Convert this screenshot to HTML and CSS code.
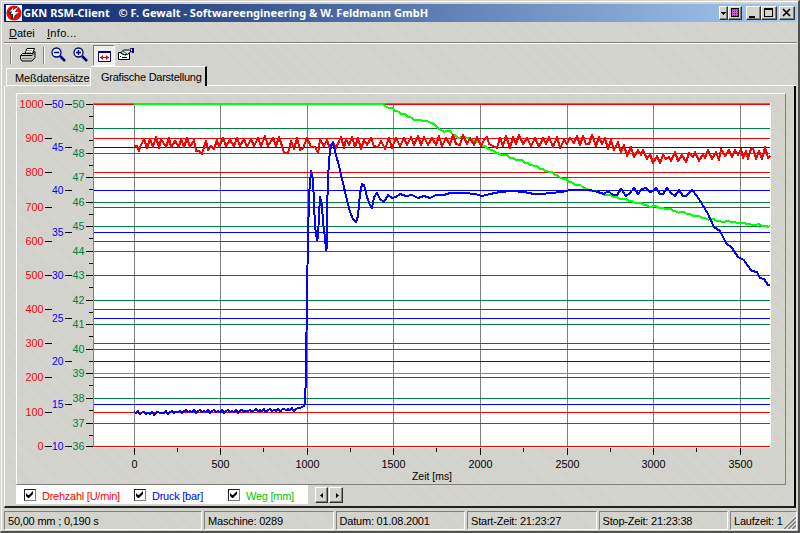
FILE: index.html
```html
<!DOCTYPE html>
<html lang="de">
<head>
<meta charset="utf-8">
<title>GKN RSM-Client</title>
<link rel="stylesheet" href="styles.css">
</head>
<body>
<div class="window">
  <header class="titlebar">
    <svg class="logo" width="16" height="16" viewBox="0 0 16 16"><rect width="16" height="16" fill="#fff"/><circle cx="8" cy="8" r="7.6" fill="#f00808"/><path d="M1 8l5-5v3l5-5v4l-3 3h4l-4 5-3 2 1-5H3l1-3z" fill="#222"/><path d="M3 7l4-4v2l5-3-3 5h4l-4 3-2 4V9H5l1-3z" fill="#fff"/></svg>
    <span class="title">GKN RSM-Client&nbsp;&nbsp; © F. Gewalt - Softwareengineering &amp; W. Feldmann GmbH</span>
    <div class="controls">
      <button class="wb narrow"><svg width="7" height="12"><path d="M1 5h5v1H5v1H4v1H3V7H2V6H1z"/></svg></button>
      <button class="wb"><svg width="12" height="12"><path d="M2 1h8v9H2z"/><path d="M3 2h6v7H3z" fill="#d060d0"/><path d="M4 2v7M6 2v7M8 2v7" transform="translate(.5 0)" stroke="#702070" stroke-dasharray="1 1"/></svg></button>
      <button class="wb min"><svg width="12" height="12"><path d="M2 9h6v2H2z"/></svg></button>
      <button class="wb wide"><svg width="13" height="12"><path d="M2 1h9v9H2z M3 3v6h7V3z" fill-rule="evenodd"/></svg></button>
      <button class="wb wide close"><svg width="13" height="12"><path d="M3 2l7 7M10 2l-7 7" stroke="#000" stroke-width="1.7"/></svg></button>
    </div>
  </header>
  <nav class="menu"><span><u>D</u>atei</span><span class="info"><u>I</u>nfo...</span></nav>
  <div class="toolbar">
    <i class="sep"></i>
    <svg class="print" width="16" height="16" viewBox="0 0 16 16"><path d="M4.500 7.500l2.500-6h7.500l-2.500 6z" fill="#fff" stroke="#000"/><path d="M7 3.500h5M6.500 5.500h5" stroke="#999"/><path d="M.5 8.500l2-2h10l2.500-2v6l-3 3.500h-10l-1.500-2z" fill="#c8c8c4" stroke="#000"/><path d="M1 8.500h11l2-2" fill="none" stroke="#000"/><path d="M2 11.500h10" stroke="#808080"/></svg>
    <i class="sep two"></i>
    <svg class="zo" width="16" height="16" viewBox="0 0 16 16"><circle cx="5.500" cy="5.500" r="4.500" fill="#eee" stroke="#000080" stroke-width="1.300"/><path d="M3 5.500h5" stroke="#000080" stroke-width="1.500"/><path d="M9 9l5 5" stroke="#000080" stroke-width="2.500"/></svg>
    <svg class="zi" width="16" height="16" viewBox="0 0 16 16"><circle cx="5.500" cy="5.500" r="4.500" fill="#eee" stroke="#000080" stroke-width="1.300"/><path d="M3 5.500h5M5.500 3v5" stroke="#000080" stroke-width="1.500"/><path d="M9 9l5 5" stroke="#000080" stroke-width="2.500"/></svg>
    <span class="pressed"><svg width="14" height="12"><path d="M.5.5h12v10H.5z" fill="#fff" stroke="#000080"/><path d="M0 0h13v2H0z" fill="#000080"/><path d="M2 6.500h9" stroke="red"/><path d="M5 4v5L2 6.500zM8 4v5l3-2.500z" fill="red"/></svg></span>
    <svg class="prop" width="17" height="13"><path d="M.5 4.500h11v7H.5z" fill="#fff" stroke="#000"/><path d="M2.500 5l3-3h7v2l-3 2.500H5z" fill="#ddd" stroke="#000"/><path d="M3 4l5 4M5 3l4 3" stroke="#008040"/><path d="M12 0h4v5h-2z" fill="#000080"/><path d="M13 1h1v2h-1z" fill="#fff"/><path d="M2 8.500h1m1 1h5" stroke="#000"/></svg>
  </div>
  <div class="tabs"><span class="tab">Meßdatensätze</span><span class="tab active">Grafische Darstellung</span><i class="tabfill"></i></div>
  <main class="page">
    <section class="panel"><svg id="chart" width="768" height="390" viewBox="17 94 768 390"></svg></section>
    <div class="below">
      <div class="legend">
        <label class="red"><i class="box"><svg width="9" height="9"><path d="M1 3v3l2 2h1l4-4V1L4 5H3z"/></svg></i><span>Drehzahl [U/min]</span></label>
        <label class="blue"><i class="box"><svg width="9" height="9"><path d="M1 3v3l2 2h1l4-4V1L4 5H3z"/></svg></i><span>Druck [bar]</span></label>
        <label class="green"><i class="box"><svg width="9" height="9"><path d="M1 3v3l2 2h1l4-4V1L4 5H3z"/></svg></i><span>Weg [mm]</span></label>
      </div>
      <button class="arrow first"><svg width="9" height="9"><path d="M5 2v5L2 4.500z"/></svg></button>
      <button class="arrow"><svg width="9" height="9"><path d="M4 2v5l3-2.500z"/></svg></button>
    </div>
  </main>
  <footer class="status">
    <span>50,00 mm ; 0,190 s</span><span>Maschine: 0289</span><span>Datum: 01.08.2001</span><span>Start-Zeit: 21:23:27</span><span>Stop-Zeit: 21:23:38</span><span class="last">Laufzeit: 1<svg class="grip" width="12" height="12"><path d="M0 12L12 0M4 12l8-8M8 12l4-4" stroke="#808080" stroke-width="2"/><path d="M-1.500 12l13.500-13.500M2.500 12L12 2.500M6.500 12L12 6.500" stroke="#fff"/></svg></span>
  </footer>
</div>
<script src="chart.js"></script>
</body>
</html>
```
FILE: styles.css
```css
* { box-sizing: border-box; }
body { margin: 0; width: 800px; height: 533px; overflow: hidden; background: #d4d3cd; font: 11px/14px "Liberation Sans", Arial, sans-serif; color: #000; }
.window { width: 800px; height: 533px; border: 1px solid #d4d3cd; border-right: 2px solid #505050; border-bottom: 2px solid #505050; padding: 0 1px 0 2px; box-shadow: inset 1px 1px #fff; display: flex; flex-direction: column; background: repeating-linear-gradient(45deg, #d6d5cf 0 1px, #d1d1cc 1px 2px); }
.titlebar { margin: 3px 0 0 1px; height: 18px; display: flex; align-items: center; background: linear-gradient(90deg, #0a246a, #a6caf0); flex: none; }
.logo { margin-left: 2px; }
.title { color: #fff; font: bold 11px/16px "Noto Sans", sans-serif; margin-left: 1px; white-space: nowrap; letter-spacing: .03px; }
.controls { display: flex; margin-left: auto; padding-right: 2px; }
button { padding: 0; margin: 0; background: #d4d3cd; border: 1px solid; border-color: #fff #303030 #303030 #fff; box-shadow: inset -1px -1px #808080; border-radius: 0; }
button svg { display: block; }
.wb { width: 14px; height: 14px; }
.wb.narrow { width: 9px; }
.wb.min { margin-left: 4px; width: 15px; }
.wb.wide { width: 16px; }
.wb.close { margin-left: 2px; }
.menu { height: 21px; margin-left: 1px; border-bottom: 1px solid #808080; box-shadow: 0 1px #fff; display: flex; padding: 4px 0 0 5px; flex: none; }
.menu span { width: 38px; }
.menu .info { letter-spacing: .3px; }
.toolbar { height: 23px; display: flex; flex: none; padding-top: 4px; }
.sep { width: 2px; height: 17px; border-left: 1px solid #808080; border-right: 1px solid #fff; margin-left: 7px; }
.sep.two { margin-left: 7px; }
.print { margin-left: 8px; }
.zo { margin-left: 6px; }
.zi { margin-left: 6px; }
.pressed { width: 22px; height: 21px; margin: -2px 0 0 4px; border: 1px solid; border-color: #808080 #fff #fff #808080; background: #eeeeeb; padding: 5px 0 0 4px; line-height: 0; }
.prop { margin: 1px 0 0 3px; }
.tabs { height: 20px; display: flex; align-items: flex-end; flex: none; padding-left: 3px; letter-spacing: -.25px; white-space: nowrap; }
.tab { width: 85px; height: 18px; border: 1px solid #fff; padding: 3px 0 0 8px; line-height: 13px; letter-spacing: -.1px; }
.tab.active { width: 116px; height: 20px; border-right: 2px solid #000; border-bottom: 0; border-left: 0; padding: 4px 0 0 10px; letter-spacing: -.25px; }
.tabfill { flex: 1; border-bottom: 1px solid #fff; margin-right: 1px; }
.page { height: 422px; width: 792px; margin-left: 1px; flex: none; border-left: 1px solid #fff; border-right: 2px solid #000; border-bottom: 2px solid #202020; padding: 7px 0 0 11px; }
.panel { width: 770px; height: 392px; border: 1px solid #808080; border-left-color: #fff; border-top-color: #fff; }
.panel svg { display: block; }
.below { display: flex; height: 19px; }
.legend { width: 292px; height: 19px; background: #fff; display: flex; letter-spacing: -.25px; }
.legend label { display: flex; padding: 4px 0 0 8px; white-space: nowrap; }
.red { width: 110px; color: red; }
.blue { width: 94px; color: #00f; }
.green { color: #00c400; }
.box { width: 12px; height: 12px; border: 1px solid #808080; border-top-color: #202020; border-left-color: #202020; margin-right: 6px; }
.box svg { display: block; }
.arrow { width: 14px; height: 16px; padding: 0 2px; margin: 2px 0 0 1px; }
.arrow.first { margin-left: 7px; width: 13px; }
.status { display: flex; gap: 2px; margin: 3px 0 0 1px; height: 19px; letter-spacing: -.2px; white-space: nowrap; }
.status span { flex: none; width: 129.500px; border: 1px solid; border-color: #808080 #fff #fff #808080; padding: 2px 3px; }
.status span:first-child { width: 198px; }
.status span:last-child { width: 67px; display: flex; padding-right: 0; }
.grip { margin: 3px 0 0 auto; }
#chart text { font: 11px "Liberation Sans", sans-serif; }
.curve { fill: none; stroke-width: 2; stroke-linejoin: round; }
```
FILE: chart.js
```js
const NS = 'http://www.w3.org/2000/svg';
const chart = document.getElementById('chart');
function add(tag, attrs, text) {
  const e = document.createElementNS(NS, tag);
  for (const k in attrs) e.setAttribute(k, attrs[k]);
  if (text !== undefined) e.textContent = text;
  chart.appendChild(e);
}
function rect(x, y, w, h, fill) { add('rect', { x, y, width: w, height: h, fill, 'shape-rendering': 'crispEdges' }); }
function label(s, right, y, w, fill) { add('text', { x: right - w, y, textLength: w, lengthAdjust: 'spacingAndGlyphs', fill }, String(s)); }
rect(93, 103, 678, 345, '#fff');
rect(93, 103, 677, 1, '#808080');
rect(93, 103, 1, 344, '#808080');
['0', '500', '1000', '1500', '2000', '2500', '3000', '3500'].forEach((s, i) => {
  const x = [134, 220, 307, 393, 480, 567, 653, 740][i];
  rect(x, 104, 1, 343, '#808080');
  rect(x, 448, 1, 7, '#000');
  if (i < 7) rect(x + 43, 448, 1, 4, '#000');
  const w = [6, 18, 24, 24, 24, 24, 24, 24][i];
  label(s, x + w / 2 + .5, 468, w, '#000');
});
const yg = [104, 128, 153, 177, 202, 226, 251, 275, 300, 324, 349, 373, 398, 423, 446];
yg.forEach((y, i) => {
  rect(94, y, 676, 1, i === 11 ? '#709090' : '#008040');
  rect(86, y, 7, 1, '#000');
  if (i < 14) rect(89, y + 12, 4, 1, '#000');
  label(50 - i, 84.5, y + 4, 12, '#008040');
});
[104, 147, 190, 232, 275, 318, 361, 404, 446].forEach((y, i) => {
  rect(94, y, 676, 1, '#00f');
  rect(65, y, 7, 1, '#000');
  label(50 - i * 5, 63.5, y + 4, 11.5, '#00f');
});
[104, 138, 172, 207, 241, 275, 309, 343, 377, 412, 446].forEach((y, i) => {
  rect(94, y, 676, 1, '#f00');
  rect(45, y, 7, 1, '#000');
  label(1000 - i * 100, 43.5, y + 4, i === 0 ? 24 : i === 10 ? 6 : 18, '#f00');
});
label('Zeit [ms]', 452, 480, 40, '#000');

function curve(points, stroke) {
  add('polyline', { points, stroke, class: 'curve', 'shape-rendering': 'crispEdges' });
}
// Adds a small repeating ripple to a coarse path.
function ripple(anchors, step, offsets) {
  const out = [];
  let n = 0;
  for (let i = 0; i < anchors.length - 1; i++) {
    const [x0, y0] = anchors[i], [x1, y1] = anchors[i + 1];
    for (let x = x0; x < x1; x += step) out.push(x + ',' + (y0 + (y1 - y0) * (x - x0) / (x1 - x0) + offsets[n++ % offsets.length]));
  }
  out.push(anchors[anchors.length - 1].join());
  return out.join(' ');
}
curve('134,104 384,104 ' + ripple([[384,105],[395,110],[405,115],[417,120],[429,121],[441,130],[450,132],[458,137],[470,138],[488,148],[495,152],[510,157],[525,162],[540,168],[555,174],[566,180],[578,185],[590,190],[605,194],[620,198],[635,202],[650,206],[665,208],[675,211],[690,214],[705,218],[720,221],[735,222],[750,224],[770,226]], 3, [0, 1, 0, -.7, .7]), '#0f0');
const redStart = '134,146 137,146 139,151 140,147 144,139 147,148 150,139 153,147 156,137 159,148 161,139 166,147 169,138 171,147 175,141 179,147 181,139 184,147 187,138 190,147 194,140 196,151 199,151 202,154 204,147 206,141 208,150 211,146 214,149 217,140 219,147 223,138 226,146 230,140 234,146 237,138 240,146 244,139 247,147 251,139 254,146 258,138 261,146 265,136 268,146 273,138 276,146 279,137 282,146 284,153 288,153 291,141 294,149 297,138 300,150 303,148 307,138 311,147 315,147 318,153 320,140 324,146 327,140 330,149 333,142 336,148 341,137 344,148 346,139 349,145 352,137 355,147 358,138 361,149 364,140 367,145 371,138 374,146 378,147 381,141 385,149 389,138 392,148 396,138 400,146 404,138 407,145 411,137 414,145 418,136 421,145 424,137 428,145 432,138 436,145 439,136 442,146 446,138 450,145 453,135 456,144 460,145 463,135 467,144 470,138 474,145 477,137 481,146 484,140 487,137 489,144 493,146 497,148 500,138 503,146 506,136 510,148 513,137 516,144 519,135 523,144 527,138 531,146 535,138 539,147 543,138 546,144 549,137 553,147 557,137 560,148 564,140 567,144 570,138 574,143 577,136 580,145 583,136 586,144 589,144';
const redEnd = '592,135 596,146 599,137 602,144 605,138 608,149 611,140 614,150 618,142 621,152 624,145 627,156 631,147 634,157 638,150 641,155 643,150 647,159 650,154 653,163 657,156 660,163 663,155 666,159 669,157 671,161 675,152 678,161 682,155 686,162 689,153 693,157 695,152 699,161 703,154 705,158 708,150 712,159 716,152 719,160 721,149 725,156 729,150 732,157 735,150 738,155 741,149 743,158 746,151 748,159 751,149 753,148 756,159 759,151 762,159 765,147 768,158 770,156';
curve(redStart + ' ' + redEnd, '#f00');
const rise = ripple([[134,412],[150,413],[190,411],[230,411],[270,410],[298,409],[300,408]], 2, [0, 1, -1, 2, 0, -1, 1]);
curve(rise + ' 304,406 305,402 306,375 307,290 308,240 309,195 311,171 313,180 314,203 315,226 317,240 318,237 319,215 320,197 322,205 323,222 325,238 326,250 327,248 327,210 328,181 329,160 331,145 333,143 336,155 339,166 343,183 347,200 350,212 353,219 356,222 358,216 360,194 362,184 364,185 367,197 370,205 372,208 374,197 377,193 380,199 384,202 388,195 392,198 396,197 400,194 406,196 412,195 418,198 424,196 430,198 436,195 444,195 450,193 465,193 475,194 482,196 490,194 500,192 512,191 524,192 534,194 542,194 550,193 562,192 570,190 590,190 598,192 604,194 608,191 613,195 617,195 621,189 626,196 630,193 634,188 638,194 642,189 646,188 650,192 653,191 656,188 660,194 663,194 667,188 671,193 675,196 679,190 683,196 686,196 689,193 692,190 697,196 702,204 708,214 714,227 720,231 726,243 732,248 738,257 744,260 747,265 752,271 757,272 760,278 764,279 768,285 770,285', '#00f');
```
